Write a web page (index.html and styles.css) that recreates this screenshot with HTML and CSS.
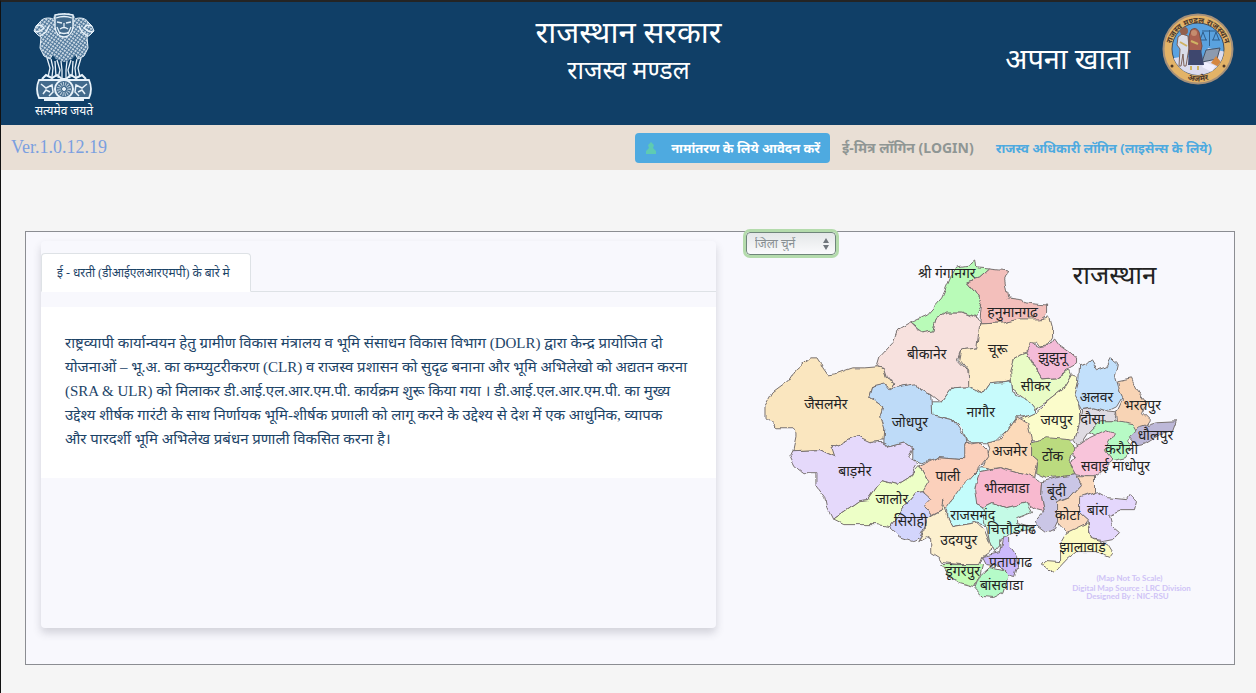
FILE: index.html
```html
<!DOCTYPE html>
<html lang="hi">
<head>
  <meta charset="UTF-8">
  <meta name="viewport" content="width=device-width, initial-scale=1">
  <title>अपना खाता - राजस्थान सरकार</title>
  <link rel="stylesheet" href="styles.css">
</head>
<body>
  <header class="site-header">
    <div class="emblem">
      <svg viewBox="0 0 64 90" width="64" height="90" fill="none" stroke="#e8f2fa" stroke-width="1" aria-hidden="true">
        <defs>
          <pattern id="mane" width="3" height="3" patternUnits="userSpaceOnUse" patternTransform="rotate(35)">
            <rect width="3" height="3" fill="#4f779a" stroke="none"/>
            <path d="M0 1H2" stroke="#f4f9fd" stroke-width="1.300"/>
          </pattern>
        </defs>
        <!-- side lions -->
        <path d="M21 7C17 5 10 6 8 10L4 14L2 19L6 23L9 25L8 36L12 44L18 47L22 40Z" fill="url(#mane)"/>
        <path d="M43 7C47 5 54 6 56 10L60 14L62 19L58 23L55 25L56 36L52 44L46 47L42 40Z" fill="url(#mane)"/>
        <path d="M4 14L9 13L12 16L8 19L3 20M8 24L14 20L17 14M60 14L55 13L52 16L56 19L61 20M56 24L50 20L47 14" stroke-width="1.400"/>
        <!-- front lion -->
        <path d="M22 3Q32 -1 42 3L44 9L44 21L48 30L46 40L40 47L32 50L24 47L18 40L16 30L20 21L20 9Z" fill="url(#mane)" stroke="none"/>
        <path d="M23 3Q32 1 41 3L41 15Q40 24 32 25Q24 24 23 15Z" fill="#426a8c" stroke-width="1.400"/>
        <path d="M24 6Q32 3 40 6M25 10L30 11M34 11L39 10M32 11V16M28 17Q32 14 36 17M27 20Q32 23 37 20M25 15L28 22M39 15L36 22" stroke-width="1.300"/>
        <!-- legs -->
        <path d="M15 46L18 56L16 65M19 47L21 56L20 65M25 48L28 58L26 66M29 49L30 58L30 66M35 49L34 58L34 66M39 48L36 58L38 66M45 47L43 56L44 65M49 46L46 56L48 65M23 49L24 65M41 49L40 65" stroke-width="1.300"/>
        <path d="M10 67L14 63L20 66L25 63L30 67L34 67L39 63L44 66L50 63L54 67" stroke-width="2"/>
        <!-- abacus with chakra -->
        <path d="M7 68H57Q61 77 57 86H7Q3 77 7 68Z" fill="#426a8c" stroke-width="1.800"/>
        <path d="M9 72L14 76L20 73L21 80L17 84M11 82L14 78L18 80M55 72L50 76L44 73L43 80L47 84M53 82L50 78L46 80" stroke-width="1.500"/>
        <circle cx="32" cy="77" r="9" fill="#426a8c" stroke-width="2"/>
        <circle cx="32" cy="77" r="5" stroke-width="4" stroke-dasharray="1 1" opacity="0.700"/>
        <circle cx="32" cy="77" r="1.500" fill="#e8f2fa"/>
        <path d="M12 88H52" stroke-width="2"/>
      </svg>
      <span class="motto">सत्यमेव जयते</span>
    </div>
    <div class="titles">
      <h1>राजस्थान सरकार</h1>
      <h2>राजस्व मण्डल</h2>
    </div>
    <div class="brand">
      <span class="brand-name">अपना खाता</span>
      <svg class="seal" viewBox="0 0 72 74" width="72" height="74" role="img" aria-label="राजस्व मण्डल राजस्थान अजमेर">
        <defs>
          <path id="ringTop" d="M11 50A27.500 27.500 0 1 1 61 50"/>
          <path id="ringBottom" d="M20 65A32 32 0 0 0 52 65"/>
          <clipPath id="sealInner"><circle cx="36" cy="37" r="26"/></clipPath>
        </defs>
        <circle cx="36" cy="37" r="34.500" fill="#e3b367" stroke="#a5907a" stroke-width="2"/>
        <circle cx="36" cy="37" r="26" fill="#5aa2df" stroke="#3e4b5c" stroke-width="1"/>
        <g clip-path="url(#sealInner)">
          <path d="M8 47L23 44L40 51L46 36L64 40V66H8Z" fill="#dcdcee"/>
          <path d="M40 50L44 38L58 36L55 47Z" fill="#8c9aaf" stroke="#465366"/>
          <path d="M43 50L53 54L50 60L40 55Z" fill="#f0efff"/>
          <path d="M49 51L54 44L59 50L57 55Z" fill="#d58741"/>
          <path d="M40 19H55M47.500 18V34M41 20L38 28M41 20L44 28M54 20L51 28M54 20L57 28M37 28H45M50 28H58" fill="none" stroke="#2f5e8c"/>
          <path d="M16 25L20 22L26 24L27 36L24 54H22L21 42L19 54H17L18 37L15 33Z" fill="#d9dce8" stroke="#7e6258"/>
          <circle cx="22" cy="19" r="4" fill="#92604e"/>
          <path d="M27 24L29 18Q34 14 37 20L40 34L38 43H27Z" fill="#aa6150" stroke="#775044"/>
          <path d="M27 38H39L42 53H26Z" fill="#3e476e"/>
          <circle cx="32" cy="21" r="3" fill="#c58c6e"/>
          <path d="M29 29L36 32M18 30L25 34M29 54V58M36 54V58" stroke="#cfb263" stroke-width="2"/>
        </g>
        <circle cx="10" cy="54" r="1.500" fill="#4c392c"/>
        <circle cx="62" cy="54" r="1.500" fill="#4c392c"/>
        <text class="seal-text"><textPath href="#ringTop" startOffset="50%" text-anchor="middle">राजस्व मण्डल राजस्थान</textPath></text>
        <text class="seal-text"><textPath href="#ringBottom" startOffset="50%" text-anchor="middle">अजमेर</textPath></text>
      </svg>
    </div>
  </header>

  <nav class="topbar">
    <span class="version">Ver.1.0.12.19</span>
    <div class="nav-links">
      <a href="#" class="btn-apply">
        <svg viewBox="0 0 12 12" width="12" height="12" fill="#5ecbb2" aria-hidden="true"><path d="M6 0L9 3L8 6L11 9V12H1V9L4 6L3 3Z"/></svg>
        नामांतरण के लिये आवेदन करें
      </a>
      <a href="#" class="link-emitra">ई-मित्र लॉगिन (LOGIN)</a>
      <a href="#" class="link-officer">राजस्व अधिकारी लॉगिन (लाइसेन्स के लिये)</a>
    </div>
  </nav>

  <main class="frame">
    <section class="col-about">
      <div class="card">
        <div class="tabs">
          <button type="button" class="tab active">ई - धरती (डीआईएलआरएमपी) के बारे मे</button>
        </div>
        <div class="tab-content">
          <p>राष्ट्रव्यापी कार्यान्वयन हेतु ग्रामीण विकास मंत्रालय व भूमि संसाधन विकास विभाग (DOLR) द्वारा केन्द्र प्रायोजित दो योजनाओं – भू.अ. का कम्प्युटरीकरण (CLR) व राजस्व प्रशासन को सुदृढ बनाना और भूमि अभिलेखो को अद्यतन करना (SRA &amp; ULR) को मिलाकर डी.आई.एल.आर.एम.पी. कार्यक्रम शुरू किया गया । डी.आई.एल.आर.एम.पी. का मुख्य उद्देश्य शीर्षक गारंटी के साथ निर्णायक भूमि-शीर्षक प्रणाली को लागू करने के उद्देश्य से देश में एक आधुनिक, व्यापक और&nbsp;पारदर्शी भूमि अभिलेख प्रबंधन प्रणाली विकसित करना है।</p>
        </div>
      </div>
    </section>

    <section class="col-map">
      <div class="district-select">
        <select id="district" aria-label="जिला चुनें">
          <option>जिला चुनें</option>
          <option>अजमेर</option>
          <option>जयपुर</option>
          <option>जोधपुर</option>
        </select>
        <svg viewBox="0 0 6 12" width="6" height="12" fill="#70767c" aria-hidden="true"><path d="M3 0L6 5H0ZM3 12L0 7H6Z"/></svg>
      </div>

      <svg class="map" viewBox="746 255 474 354" role="img" aria-label="राजस्थान के जिले">
        <defs>
          <filter id="rough" x="-2%" y="-2%" width="104%" height="104%" color-interpolation-filters="sRGB">
            <feTurbulence type="fractalNoise" baseFrequency="0.11" numOctaves="1" seed="4"/>
            <feDisplacementMap in="SourceGraphic" scale="7" xChannelSelector="R" yChannelSelector="G"/>
          </filter>
        </defs>
        <g class="districts" filter="url(#rough)">
          <path fill="#fae6bf" d="M796 370L803 364L810 358H817L821 364L823 368L828 375L836 374L847 370L853 368L865 368L877 367L884 369L887 378L896 383L893 390L887 385L873 387L870 397L883 407L880 417L884 423V440L868 442L857 436L843 443L833 447L835 457L820 450L793 451L796 437V432L792 428H777L765 418V407L773 393L788 382Z"/>
          <path fill="#e5d9fb" d="M793 451L790 457L795 467L803 473H817V487L825 498L827 508L833 520L850 508L860 501L868 500L877 487L883 481L897 485L910 477L918 464L908 458L912 448L905 443L890 447L883 443L870 442L857 436L848 440L832 448L835 457L820 450Z"/>
          <path fill="#f7e1de" d="M877 367L880 357L893 343L898 330L910 323L917 330L933 330L937 318L947 312H963L977 318L983 328L977 348L962 350L958 360L967 370L969 387L953 388L942 403L932 395L920 390L917 385L903 386L893 390L896 383L887 378L884 369Z"/>
          <path fill="#b9fbb8" d="M910 323L927 315L942 298L952 275L957 267L970 265L976 260L977 268L990 269L980 278L967 282L975 292L982 303L977 317L963 312H947L937 318L933 330L922 332Z"/>
          <path fill="#f3bfbb" d="M990 269L1009 271L1005 280L1008 298L1023 300L1025 303L1047 305V315L1040 320H1020L1003 323L980 324L982 303L975 292L967 282L980 278Z"/>
          <path fill="#feedc8" d="M980 324L1003 323L1020 319H1040L1050 317L1053 328V337L1048 345L1040 346L1037 342L1027 353L1015 358L1013 380L1003 382L990 383L983 393L968 388V370L960 360L962 350L977 348Z"/>
          <path fill="#e9fcc6" d="M1027 353L1015 358L1011 373L1013 390L1027 400L1035 410L1050 400L1063 390L1072 375L1070 370L1057 378L1042 379L1035 367Z"/>
          <path fill="#f4bbd8" d="M1055 338L1060 345L1070 352L1077 358V365L1068 370L1057 378L1042 379L1035 367L1032 360L1027 353L1032 343L1040 347L1050 345Z"/>
          <path fill="#c7fbfc" d="M983 393L990 383L1012 381L1013 393L1027 400L1037 412L1027 417H1017L1008 430L997 440L987 443H967L963 430L953 420L933 415L932 403L942 403L953 388L969 387Z"/>
          <path fill="#bedbf8" d="M873 387L885 384L890 390L903 386L917 384L920 390L932 395L933 415L953 420L965 437L967 450L965 459L940 457L923 463L912 460L912 448L905 443L890 447L883 443L884 430L880 417L883 407L870 397Z"/>
          <path fill="#fbfccb" d="M1072 375L1080 377L1077 393L1080 410V423L1075 440L1060 442L1032 440L1028 432L1020 420L1037 412L1050 400L1063 390Z"/>
          <path fill="#fcdaba" d="M1017 417L1028 423L1032 440V457L1038 462L1035 478L1017 473L1000 468L982 470L990 450L988 442L1000 440L1008 430Z"/>
          <path fill="#dfdbe2" d="M1082 410L1093 408L1107 412L1117 413L1115 422H1100L1090 432L1080 447L1075 440L1080 423Z"/>
          <path fill="#f8d4b5" d="M1118 382L1132 379L1137 390L1147 403L1143 413L1150 420L1142 432L1130 430L1118 422L1117 413L1123 400Z"/>
          <path fill="#c2e0fb" d="M1080 365L1088 363L1092 360L1098 370L1107 367L1112 358L1118 363L1115 377L1118 387L1123 397L1117 407L1107 412L1093 408L1082 410L1075 397L1079 383Z"/>
          <path fill="#b7fac5" d="M1100 422H1118L1133 425L1137 432L1128 440L1133 447L1127 457L1113 460L1102 450L1103 440L1090 432Z"/>
          <path fill="#bdb8d8" d="M1130 437L1140 427L1157 422L1177 421L1173 432L1160 435L1147 443L1137 445Z"/>
          <path fill="#f8c4da" d="M1077 447L1090 438L1107 430L1115 433L1105 450L1113 460L1100 473L1093 478L1077 475L1070 463L1077 458L1069 448Z"/>
          <path fill="#bbdb7f" d="M1032 442L1047 438L1070 440L1075 447L1070 462L1077 475L1060 477L1047 478L1037 473L1038 462L1032 457Z"/>
          <path fill="#fbd0bb" d="M965 445L980 443L987 450L988 457L980 467L972 480L960 493L947 510L943 502L942 510L932 515L925 507L930 500L923 492L928 480L920 466L940 457L965 459Z"/>
          <path fill="#edffc7" d="M833 520L850 508L860 501L868 500L877 487L883 481L897 485L910 477L920 466L929 482L923 492L917 493L903 510L890 527L877 525H860L843 525Z"/>
          <path fill="#d3d5fc" d="M917 493L923 492L932 500L925 507L932 515L927 523L920 538L912 541L900 537L890 527L903 510Z"/>
          <path fill="#c4fcfb" d="M982 467L990 468L978 480L980 493L977 505L987 510L990 527L977 523L953 527L947 518V508L960 490L970 480Z"/>
          <path fill="#f8b9cf" d="M980 472L1000 468L1017 473L1035 478L1043 482L1042 497L1045 512L1037 510L1027 503L1007 508L993 503L983 508L977 505L975 490L977 480Z"/>
          <path fill="#cac6e6" d="M1043 482L1060 477L1077 475L1082 485L1070 498L1058 502L1060 517L1055 528L1047 532L1035 523L1045 512L1042 497Z"/>
          <path fill="#fad9bd" d="M1078 477H1095V492L1080 500V513L1088 520L1083 527L1067 533L1058 523V503L1070 498L1082 485Z"/>
          <path fill="#e4d7fc" d="M1080 498L1097 492L1108 498L1127 500L1130 495L1137 502L1135 510H1123L1110 515L1113 527L1120 533L1113 540L1103 542L1092 540L1088 520L1080 513Z"/>
          <path fill="#fcfbc3" d="M1067 533L1088 523L1092 540L1108 545L1113 553L1110 557L1097 552H1077L1067 560L1055 573L1043 565L1047 561L1060 562V545Z"/>
          <path fill="#c4fae6" d="M983 508L993 503L1007 508L1027 503L1032 512L1017 518V524L1035 529L1013 533L1000 540V547L995 553L990 543L987 527Z"/>
          <path fill="#fcf0cf" d="M943 500L947 518L953 527L977 523L985 530L993 550L983 557L980 565H960L943 563L940 558L932 553V540L927 537L918 542L925 530L928 518L942 510Z"/>
          <path fill="#c2fbb5" d="M942 565H983L980 577L975 587L960 583L950 577Z"/>
          <path fill="#b5fbc8" d="M980 577L990 568L1008 572V578L1003 593L993 598L983 597L975 590Z"/>
          <path fill="#cbb9fa" d="M983 557L1000 553L1003 537L1010 538V547L1017 557L1018 567L1015 577L1008 575L1000 567L987 565Z"/>
        </g>
        <g class="labels">
          <text x="947" y="278">श्री गंगानगर</text>
          <text x="1013" y="317">हनुमानगढ</text>
          <text x="927" y="359">बीकानेर</text>
          <text x="998" y="354">चूरू</text>
          <text x="1053" y="362">झुझुनू</text>
          <text x="1036" y="391">सीकर</text>
          <text x="1097" y="402">अलवर</text>
          <text x="826" y="409">जैसलमेर</text>
          <text x="1143" y="410">भरतपुर</text>
          <text x="981" y="417">नागौर</text>
          <text x="1057" y="425">जयपुर</text>
          <text x="1093" y="424">दौसा</text>
          <text x="910" y="427">जोधपुर</text>
          <text x="1156" y="440">धौलपुर</text>
          <text x="1122" y="454">करौली</text>
          <text x="1010" y="456">अजमेर</text>
          <text x="1053" y="461">टोंक</text>
          <text x="1116" y="471">सवाई माधोपुर</text>
          <text x="855" y="476">बाड़मेर</text>
          <text x="948" y="481">पाली</text>
          <text x="1007" y="493">भीलवाडा</text>
          <text x="1057" y="496">बूंदी</text>
          <text x="892" y="504">जालोर</text>
          <text x="1098" y="515">बांरा</text>
          <text x="973" y="520">राजसमंद</text>
          <text x="1068" y="520">कोटा</text>
          <text x="911" y="526">सिरोही</text>
          <text x="1012" y="534">चित्तौड़गढ</text>
          <text x="959" y="545">उदयपुर</text>
          <text x="1083" y="552">झालावाड़</text>
          <text x="1011" y="567">प्रतापगढ</text>
          <text x="963" y="576">डूंगरपुर</text>
          <text x="1002" y="590">बांसवाडा</text>
        </g>
        <text class="map-title" x="1115" y="284">राजस्थान</text>
        <g class="map-credit">
          <text x="1130" y="581">(Map Not To Scale)</text>
          <text x="1132" y="591">Digital Map Source : LRC Division</text>
          <text x="1128" y="599">Designed By : NIC-RSU</text>
        </g>
      </svg>
    </section>
  </main>
</body>
</html>
```
FILE: styles.css
```css
* { box-sizing: border-box; }
body {
  margin: 0;
  min-height: 100vh;
  border-left: 1px solid #111;
  border-top: 2px solid #242424;
  background: #f5f5f5;
  font-family: "Liberation Serif", "Noto Sans", serif;
  color: #1d4468;
}
h1, h2, p { margin: 0; font-weight: normal; }
a { text-decoration: none; }

.site-header {
  display: grid;
  grid-template-columns: 1fr auto 1fr;
  height: 123px;
  padding: 10px 22px 0;
  background: #103f67;
  color: #fff;
}
.emblem {
  display: flex; flex-direction: column; align-items: center;
  justify-self: start;
  width: 66px;
  margin-left: 8px;
}
.motto { font-size: 12px; line-height: 18px; white-space: nowrap; }
.titles { text-align: center; }
.titles h1 { font-size: 31px; line-height: 42px; }
.titles h2 { font-size: 25px; line-height: 34px; }
.brand {
  display: flex; align-items: flex-start; justify-content: flex-end;
  gap: 32px;
}
.brand-name { font-size: 29px; line-height: 42px; margin-top: 26px; }
.seal-text {
  font: bold 8px "Noto Sans", sans-serif;
  fill: #4c392c;
}

.topbar {
  display: flex; justify-content: space-between; align-items: center;
  height: 45px;
  padding: 0 44px 0 10px;
  background: #e9dfd5;
}
.version { font-size: 18px; color: #7b9fe0; }
.nav-links {
  display: flex; align-items: center;
  font-family: "Noto Sans", sans-serif;
  font-size: 13px; font-weight: bold;
}
.btn-apply {
  display: flex; align-items: center; gap: 14px;
  height: 30px;
  padding: 0 10px;
  margin-right: 12px;
  background: #4eaae0;
  color: #fff;
  border-radius: 4px;
}
.link-emitra { color: #8f9694; margin-right: 22px; font-size: 14px; }
.link-officer { color: #4eaae0; }

.frame {
  display: flex;
  margin: 61px 21px 28px 24px;
  border: 1px solid #8b8d92;
  background: #f8f8fd;
}
.col-about { width: 58.33%; padding: 9px 15px 36px; }
.col-map { width: 41.67%; padding: 0 15px; }

.card {
  height: 387px;
  padding-top: 12px;
  border-radius: 4px;
  box-shadow: 0 5px 9px rgba(60, 60, 80, 0.2);
}
.tabs {
  display: flex;
  border-bottom: 1px solid #dee2e6;
}
.tab {
  height: 39px;
  margin-bottom: -1px;
  padding: 0 20px 0 15px;
  border: 1px solid #dee2e6;
  border-bottom-color: #fff;
  border-radius: 4px 4px 0 0;
  background: #fff;
  font: 12px "Liberation Serif", "Noto Sans", serif;
  color: #1d4468;
}
.tab-content {
  margin-top: 15px;
  padding: 24px 24px 27px;
  background: #fff;
}
.tab-content p { font-size: 15px; line-height: 24px; }

.district-select {
  position: relative;
  width: 90px;
}
.district-select select {
  appearance: none;
  display: block;
  width: 90px; height: 23px;
  padding: 0 8px;
  border: 1px solid #6f857a;
  border-radius: 4px;
  outline: 3px solid #b4dbac;
  background: linear-gradient(#e4e7e8, #fafafc);
  font: 12px "Liberation Serif", "Noto Sans", serif;
  color: #888f92;
}
.district-select svg {
  position: absolute;
  right: 7px; top: 6px;
  pointer-events: none;
}
.map { display: block; width: 100%; }
.districts path { stroke: #77706f; stroke-width: 1; }
.labels text {
  font: 14px "Liberation Serif", "Noto Sans", serif;
  fill: #222;
  text-anchor: middle;
}
.map-title {
  font: 26px "Liberation Serif", "Noto Sans", serif;
  fill: #222;
  text-anchor: middle;
}
.map-credit text {
  font: bold 8px Lato, sans-serif;
  fill: #cfc3f6;
  text-anchor: middle;
}
```
